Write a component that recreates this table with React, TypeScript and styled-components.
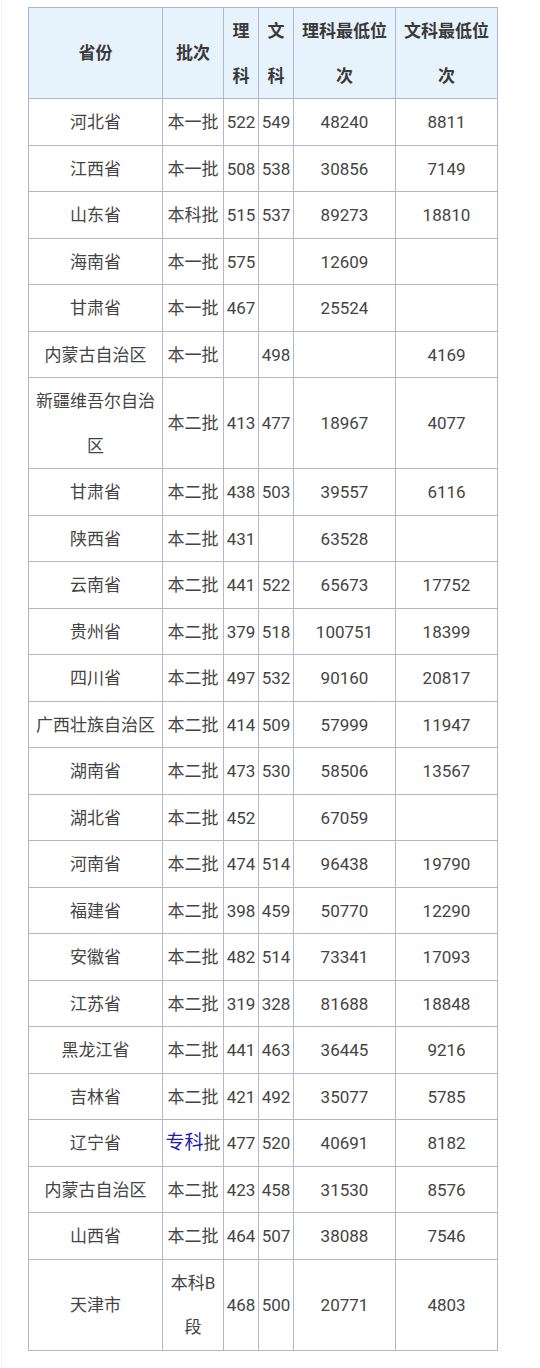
import { FC } from 'react'
import styled, { createGlobalStyle } from 'styled-components'

interface Row {
  province: string
  batch: string
  li?: string
  wen?: string
  liRank?: string
  wenRank?: string
  linked?: boolean
}

const rows: Row[] = [
  { province: '河北省', batch: '本一批', li: '522', wen: '549', liRank: '48240', wenRank: '8811' },
  { province: '江西省', batch: '本一批', li: '508', wen: '538', liRank: '30856', wenRank: '7149' },
  { province: '山东省', batch: '本科批', li: '515', wen: '537', liRank: '89273', wenRank: '18810' },
  { province: '海南省', batch: '本一批', li: '575', liRank: '12609' },
  { province: '甘肃省', batch: '本一批', li: '467', liRank: '25524' },
  { province: '内蒙古自治区', batch: '本一批', wen: '498', wenRank: '4169' },
  { province: '新疆维吾尔自治区', batch: '本二批', li: '413', wen: '477', liRank: '18967', wenRank: '4077' },
  { province: '甘肃省', batch: '本二批', li: '438', wen: '503', liRank: '39557', wenRank: '6116' },
  { province: '陕西省', batch: '本二批', li: '431', liRank: '63528' },
  { province: '云南省', batch: '本二批', li: '441', wen: '522', liRank: '65673', wenRank: '17752' },
  { province: '贵州省', batch: '本二批', li: '379', wen: '518', liRank: '100751', wenRank: '18399' },
  { province: '四川省', batch: '本二批', li: '497', wen: '532', liRank: '90160', wenRank: '20817' },
  { province: '广西壮族自治区', batch: '本二批', li: '414', wen: '509', liRank: '57999', wenRank: '11947' },
  { province: '湖南省', batch: '本二批', li: '473', wen: '530', liRank: '58506', wenRank: '13567' },
  { province: '湖北省', batch: '本二批', li: '452', liRank: '67059' },
  { province: '河南省', batch: '本二批', li: '474', wen: '514', liRank: '96438', wenRank: '19790' },
  { province: '福建省', batch: '本二批', li: '398', wen: '459', liRank: '50770', wenRank: '12290' },
  { province: '安徽省', batch: '本二批', li: '482', wen: '514', liRank: '73341', wenRank: '17093' },
  { province: '江苏省', batch: '本二批', li: '319', wen: '328', liRank: '81688', wenRank: '18848' },
  { province: '黑龙江省', batch: '本二批', li: '441', wen: '463', liRank: '36445', wenRank: '9216' },
  { province: '吉林省', batch: '本二批', li: '421', wen: '492', liRank: '35077', wenRank: '5785' },
  { province: '辽宁省', batch: '批', linked: true, li: '477', wen: '520', liRank: '40691', wenRank: '8182' },
  { province: '内蒙古自治区', batch: '本二批', li: '423', wen: '458', liRank: '31530', wenRank: '8576' },
  { province: '山西省', batch: '本二批', li: '464', wen: '507', liRank: '38088', wenRank: '7546' },
  { province: '天津市', batch: '本科B段', li: '468', wen: '500', liRank: '20771', wenRank: '4803' },
]

const GlobalStyle = createGlobalStyle`
  html, body {
    margin: 0;
    padding: 0;
    background: #fff;
  }
  body {
    font-family: Roboto, "Noto Sans CJK SC", sans-serif;
  }
`

const App: FC = () => {
  return (
    <Page>
      <GlobalStyle />
      <Table>
        <colgroup>
          <col style={{ width: 134 }} />
          <col style={{ width: 61 }} />
          <col style={{ width: 35 }} />
          <col style={{ width: 35 }} />
          <col style={{ width: 102 }} />
          <col style={{ width: 102 }} />
        </colgroup>
        <thead>
          <tr>
            <HeadCell>省份</HeadCell>
            <HeadCell>批次</HeadCell>
            <HeadCell>理科</HeadCell>
            <HeadCell>文科</HeadCell>
            <HeadCell>理科最低位次</HeadCell>
            <HeadCell>文科最低位次</HeadCell>
          </tr>
        </thead>
        <tbody>
          {rows.map((r, i) => (
            <tr key={i}>
              <Cell>{r.province}</Cell>
              <Cell>
                {r.linked && <Link>专科</Link>}
                {r.batch}
              </Cell>
              <Cell>{r.li}</Cell>
              <Cell>{r.wen}</Cell>
              <Cell>{r.liRank}</Cell>
              <Cell>{r.wenRank}</Cell>
            </tr>
          ))}
        </tbody>
      </Table>
    </Page>
  )
}

const Page = styled.div`
  min-height: 1368px;
  margin-left: 1px;
  padding: 7px 0 0 26px;
  border-left: 1px solid #f1f1f1;
  box-sizing: border-box;
`

const Table = styled.table`
  width: 470px;
  table-layout: fixed;
  border-collapse: collapse;
  border: 1px solid #b3b3d3;
`

const Cell = styled.td`
  border: 1px solid #b3b3d3;
  padding: 1px 1px 0;
  font-size: 17px;
  line-height: 44.5px;
  color: #444;
  text-align: center;
  vertical-align: middle;
  white-space: normal;
  word-break: break-all;
  overflow: visible;
`

const HeadCell = styled(Cell).attrs({ as: 'th' })`
  background: #e7f3fc;
  color: #3a3a3a;
  font-weight: bold;
`

const Link = styled.span`
  color: #1c1cae;
  font-size: 19px;
`

export default App
